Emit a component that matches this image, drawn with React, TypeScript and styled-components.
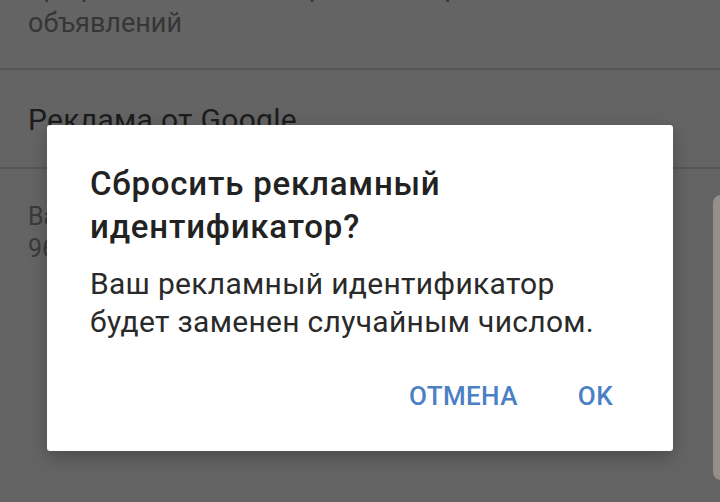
import React from "react";
import styled, { createGlobalStyle } from "styled-components";

const GlobalStyle = createGlobalStyle`
  html, body {
    margin: 0;
    padding: 0;
    background: #646464;
  }
  body {
    font-family: Roboto, "Noto Sans", "DejaVu Sans", sans-serif;
  }
`;

const Screen = styled.div`
  position: relative;
  width: 720px;
  height: 502px;
  overflow: hidden;
  background: #646464;
`;

const SettingsList = styled.div`
  display: flex;
  flex-direction: column;
`;

const Row = styled.div<{ $top: number; $bottom: number }>`
  padding: ${(p) => p.$top}px 28px ${(p) => p.$bottom}px;
  border-bottom: 2px solid #575757;

  &:first-child {
    margin-top: -31px;
  }

  &:last-child {
    border-bottom: none;
  }
`;

const Summary = styled.div`
  font-size: 27px;
  line-height: 36px;
  color: #363636;
  white-space: nowrap;
`;

const RowTitle = styled.div`
  font-size: 30px;
  line-height: 40px;
  letter-spacing: 0.3px;
  color: #1c1c1c;
`;

const RowValue = styled.div`
  font-size: 25px;
  line-height: 32px;
  color: #3a3a3a;
  white-space: nowrap;
`;

// sliver of the next card peeking in from the right edge
const SideCard = styled.div`
  position: absolute;
  left: 713px;
  top: 195px;
  width: 40px;
  height: 285px;
  border-radius: 8px;
  background: #958f89;
`;

const Dialog = styled.div`
  position: absolute;
  left: 47px;
  top: 125px;
  width: 626px;
  height: 326px;
  box-sizing: border-box;
  padding: 37px 43px 0;
  background: #ffffff;
  border-radius: 3px;
  box-shadow: 0 6px 18px rgba(0, 0, 0, 0.25);
  display: flex;
  flex-direction: column;
`;

const DialogTitle = styled.div`
  font-size: 33px;
  line-height: 43px;
  letter-spacing: 0.8px;
  font-weight: 500;
  color: #222222;
`;

const DialogBody = styled.div`
  margin-top: 17px;
  font-size: 30px;
  line-height: 38px;
  letter-spacing: 0.3px;
  color: #2a2a2a;
`;

const Actions = styled.div`
  margin-top: 40px;
  margin-right: 17px;
  display: flex;
  justify-content: flex-end;
  gap: 60px;
`;

const ActionButton = styled.button`
  border: none;
  background: none;
  padding: 0;
  font-family: inherit;
  font-size: 26px;
  line-height: 30px;
  letter-spacing: 0.4px;
  font-weight: 500;
  color: #4a80c4;
  cursor: pointer;
`;

const App = () => {
  return (
    <>
      <GlobalStyle />
      <Screen>
        <SettingsList>
          <Row $top={0} $bottom={27}>
            <Summary>
              профилей и показа персонализированных
              <br />
              объявлений
            </Summary>
          </Row>
          <Row $top={30} $bottom={27}>
            <RowTitle>Реклама от Google</RowTitle>
          </Row>
          <Row $top={32} $bottom={20}>
            <RowValue>Ваш рекламный идентификатор:</RowValue>
            <RowValue>96c1d7e0-4b8a-4e3f-a2c6-5d0b7e91c4a8</RowValue>
          </Row>
        </SettingsList>
        <SideCard />
        <Dialog>
          <DialogTitle>
            Сбросить рекламный
            <br />
            идентификатор?
          </DialogTitle>
          <DialogBody>
            Ваш рекламный идентификатор
            <br />
            будет заменен случайным числом.
          </DialogBody>
          <Actions>
            <ActionButton>ОТМЕНА</ActionButton>
            <ActionButton>OK</ActionButton>
          </Actions>
        </Dialog>
      </Screen>
    </>
  );
};

export default App;
